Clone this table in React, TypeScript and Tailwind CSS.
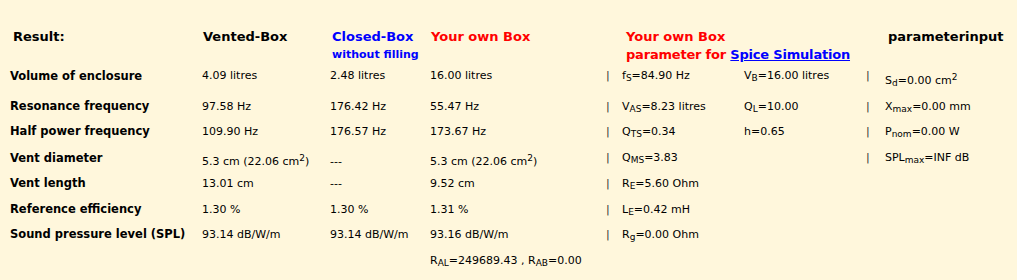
import React from 'react';

const cols = "grid grid-cols-[192px_128px_100px_176px_16px_122px_122px_19px_1fr]";

type RowProps = {
  label?: string;
  vented?: React.ReactNode;
  closed?: React.ReactNode;
  own?: React.ReactNode;
  spice1?: React.ReactNode;
  spice2?: React.ReactNode;
  param?: React.ReactNode;
  pipes?: boolean;
  pipe2?: boolean;
  className?: string;
  shift?: string;
  paramShift?: string;
};

const Row = ({ label, vented, closed, own, spice1, spice2, param, pipes = true, pipe2 = false, className = "", shift = "", paramShift = "" }: RowProps) => (
  <div className={`${cols} h-6 items-center ${className}`}>
    <div className="font-bold text-[11.5px]">{label}</div>
    <div className={shift}>{vented}</div>
    <div className={shift}>{closed}</div>
    <div className={shift}>{own}</div>
    <div className="text-[#333]">{pipes ? '|' : ''}</div>
    <div>{spice1}</div>
    <div>{spice2}</div>
    <div className="text-[#333]">{pipe2 ? '|' : ''}</div>
    <div className={paramShift}>{param}</div>
  </div>
);

const Sub = ({ children }: { children: React.ReactNode }) => (
  <sub className="text-[9px]">{children}</sub>
);

const Sup = ({ children }: { children: React.ReactNode }) => (
  <sup className="text-[9px]">{children}</sup>
);

export default function App() {
  return (
    <div className="w-[1017px] h-[280px] bg-[#FFF7DC] text-black text-[11px] font-['DejaVu_Sans',sans-serif] pl-[10px] pt-[28px] overflow-hidden">
      {/* header */}
      <div className={`${cols} text-[13px] font-bold leading-[18px] h-[35px]`}>
        <div className="pl-[3px]">Result:</div>
        <div className="pl-[1px]">Vented-Box</div>
        <div className="pl-[2px] text-[#0000FF]">
          Closed-Box
          <div className="text-[11px]">without filling</div>
        </div>
        <div className="pl-[1px] text-[#FF0000]">Your own Box</div>
        <div></div>
        <div className="col-span-2 pl-[4px] text-[#FF0000]">
          Your own Box
          <div className="whitespace-nowrap tracking-[-0.2px]">
            parameter for <a href="#" className="text-[#0000FF] underline">Spice Simulation</a>
          </div>
        </div>
        <div></div>
        <div className="pl-[3px]">parameterinput</div>
      </div>

      <Row
        label="Volume of enclosure"
        vented="4.09 litres"
        closed="2.48 litres"
        own="16.00 litres"
        spice1={<>f<Sub>S</Sub>=84.90 Hz</>}
        spice2={<>V<Sub>B</Sub>=16.00 litres</>}
        pipe2
        paramShift="pt-[10px]"
        param={<>S<Sub>d</Sub>=0.00 cm<Sup>2</Sup></>}
      />
      <Row
        label="Resonance frequency"
        vented="97.58 Hz"
        closed="176.42 Hz"
        own="55.47 Hz"
        spice1={<>V<Sub>AS</Sub>=8.23 litres</>}
        spice2={<>Q<Sub>L</Sub>=10.00</>}
        pipe2
        param={<>X<Sub>max</Sub>=0.00 mm</>}
        className="mt-[8px]"
      />
      <Row
        label="Half power frequency"
        vented="109.90 Hz"
        closed="176.57 Hz"
        own="173.67 Hz"
        spice1={<>Q<Sub>TS</Sub>=0.34</>}
        spice2="h=0.65"
        pipe2
        param={<>P<Sub>nom</Sub>=0.00 W</>}
        className="mt-[1px]"
      />
      <Row
        label="Vent diameter"
        vented={<>5.3 cm (22.06 cm<Sup>2</Sup>)</>}
        closed="---"
        own={<>5.3 cm (22.06 cm<Sup>2</Sup>)</>}
        shift="pt-[8px]"
        spice1={<>Q<Sub>MS</Sub>=3.83</>}
        pipe2
        param={<>SPL<Sub>max</Sub>=INF dB</>}
        className="mt-[2px]"
      />
      <Row
        label="Vent length"
        vented="13.01 cm"
        closed="---"
        own="9.52 cm"
        spice1={<>R<Sub>E</Sub>=5.60 Ohm</>}
        className="mt-[2px]"
      />
      <Row
        label="Reference efficiency"
        vented="1.30 %"
        closed="1.30 %"
        own="1.31 %"
        spice1={<>L<Sub>E</Sub>=0.42 mH</>}
        className="mt-[2px]"
      />
      <Row
        label="Sound pressure level (SPL)"
        vented="93.14 dB/W/m"
        closed="93.14 dB/W/m"
        own="93.16 dB/W/m"
        spice1={<>R<Sub>g</Sub>=0.00 Ohm</>}
        className="mt-[1px]"
      />
      <Row
        pipes={false}
        own={<span className="whitespace-nowrap">R<Sub>AL</Sub>=249689.43 , R<Sub>AB</Sub>=0.00</span>}
        className="mt-[2px]"
      />
    </div>
  );
}
